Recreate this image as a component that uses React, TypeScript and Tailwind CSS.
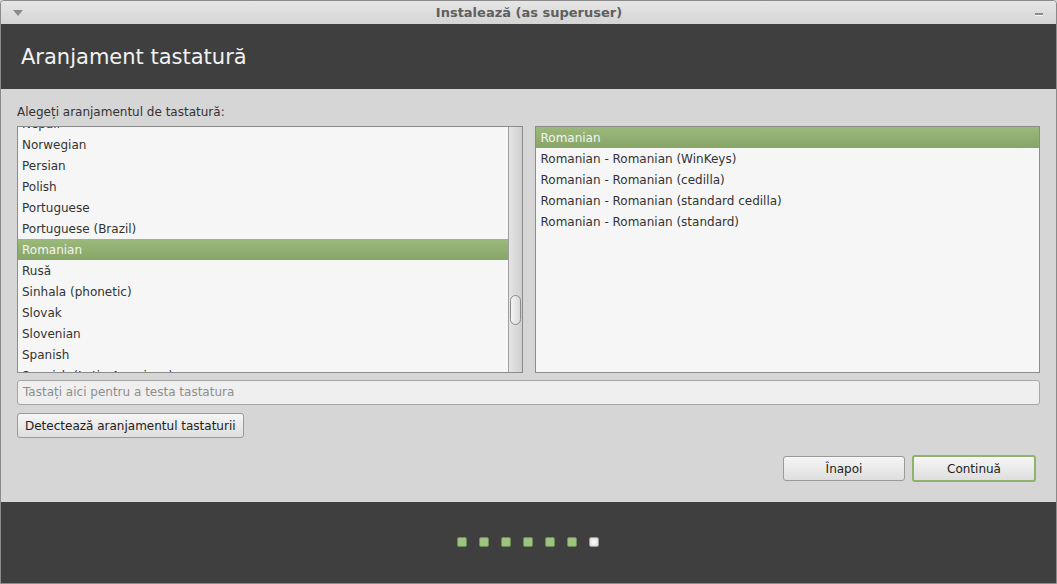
const LEFT_ITEMS = [
  "Nepali",
  "Norwegian",
  "Persian",
  "Polish",
  "Portuguese",
  "Portuguese (Brazil)",
  "Romanian",
  "Rusă",
  "Sinhala (phonetic)",
  "Slovak",
  "Slovenian",
  "Spanish",
  "Spanish (Latin American)",
];

const RIGHT_ITEMS = [
  "Romanian",
  "Romanian - Romanian (WinKeys)",
  "Romanian - Romanian (cedilla)",
  "Romanian - Romanian (standard cedilla)",
  "Romanian - Romanian (standard)",
];

const font = "font-['DejaVu_Sans','Liberation_Sans',sans-serif]";

function Row({ label, selected, wide }: { label: string; selected: boolean; wide?: boolean }) {
  return (
    <div
      className={
        "h-[21px] shrink-0 pt-[1px] text-[12px] leading-[20px] whitespace-nowrap " +
        (wide ? "pl-[5px] " : "pl-1 ") +
        (selected
          ? "bg-gradient-to-b from-[#9cb97d] to-[#87a566] text-[#f4f4f4]"
          : "text-[#333333]")
      }
    >
      {label}
    </div>
  );
}

function Dot({ done }: { done: boolean }) {
  return (
    <span
      className={
        "h-[10px] w-[10px] rounded-[2px] border " +
        (done
          ? "border-[#6f8d58] bg-[#9cc47e]"
          : "border-[#9a9a9a] bg-radial from-white to-[#d8d8d8]")
      }
    />
  );
}

export default function App() {
  return (
    <div className={`${font} h-[584px] w-[1057px] overflow-hidden bg-[#d6d6d6]`}>
      <div className="flex h-full flex-col overflow-hidden rounded-t-[4px] border border-[#8a8a8a]">
        {/* Title bar */}
        <div className="flex h-[23px] shrink-0 items-center bg-gradient-to-b from-[#e6e6e6] to-[#d4d4d4] px-3">
          <svg width="10" height="6" viewBox="0 0 10 6" className="mt-[1px]">
            <path d="M0 0 L10 0 L5 6 Z" fill="#8c8c8c" />
          </svg>
          <div className="flex-1 text-center text-[13px] font-bold text-[#5f5f5f]">
            Instalează (as superuser)
          </div>
          <div className="mr-[1px] mt-[3px] flex flex-col">
            <span className="h-[2px] w-[8px] bg-[#8c8c8c]" />
            <span className="h-[1px] w-[8px] bg-[#f4f4f4]" />
          </div>
        </div>

        {/* Header */}
        <div className="flex h-[65px] shrink-0 items-center bg-[#3f3f3f] pl-5 pt-[2px]">
          <h1 className="text-[21px] text-[#f2f2f2]">Aranjament tastatură</h1>
        </div>

        {/* Body */}
        <div className="flex h-[413px] shrink-0 flex-col px-4 pt-[14px]">
          <p className="h-[18px] text-[12px] leading-[18px] text-[#333333]">
            Alegeți aranjamentul de tastatură:
          </p>
          <div className="mt-[5px] grid h-[247px] grid-cols-2 gap-3">
            <div className="flex overflow-hidden border border-[#8c8c8c] bg-[#f6f6f6]">
              <div className="flex flex-1 flex-col overflow-hidden">
                <div className="-mt-[14px] flex flex-col">
                  {LEFT_ITEMS.map((l) => (
                    <Row key={l} label={l} selected={l === "Romanian"} />
                  ))}
                </div>
              </div>
              <div className="flex w-[14px] shrink-0 flex-col border-l border-[#a0a0a0] bg-gradient-to-r from-[#e4e4e4] to-[#d0d0d0] px-[1px] pt-[168px]">
                <div className="h-[30px] rounded-full border border-[#8c8c8c] bg-gradient-to-r from-[#f4f4f4] to-[#d8d8d8]" />
              </div>
            </div>
            <div className="flex flex-col overflow-hidden border border-[#8c8c8c] bg-[#f6f6f6]">
              {RIGHT_ITEMS.map((l, i) => (
                <Row key={l} label={l} selected={i === 0} wide />
              ))}
            </div>
          </div>

          <div className="mt-[7px] h-[25px] rounded-[3px] border border-[#a6a6a6] bg-[#efefef] pl-[5px] text-[12px] leading-[23px] text-[#8e8e8e]">
            Tastați aici pentru a testa tastatura
          </div>

          <div className="mt-[8px] flex">
            <button className="h-[25px] rounded-[3px] border border-[#9a9a9a] bg-gradient-to-b from-[#f6f6f6] to-[#dedede] px-[7px] text-[12px] text-[#222222]">
              Detectează aranjamentul tastaturii
            </button>
          </div>

          <div className="mt-[17px] flex items-center justify-end gap-[7px] pr-[4px]">
            <button className="h-[25px] w-[122px] rounded-[3px] border border-[#9a9a9a] bg-gradient-to-b from-[#f6f6f6] to-[#dedede] text-[12px] text-[#222222]">
              Înapoi
            </button>
            <button className="h-[27px] w-[124px] rounded-[3px] border-2 border-[#8fb26c] bg-gradient-to-b from-[#f6f6f6] to-[#dedede] text-[12px] text-[#222222]">
              Continuă
            </button>
          </div>
        </div>

        {/* Footer */}
        <div className="flex flex-1 items-center justify-center gap-[12px] bg-[#3f3f3f] pb-[2px] pr-[2px]">
          {[0, 1, 2, 3, 4, 5, 6].map((i) => (
            <Dot key={i} done={i < 6} />
          ))}
        </div>
      </div>
    </div>
  );
}
